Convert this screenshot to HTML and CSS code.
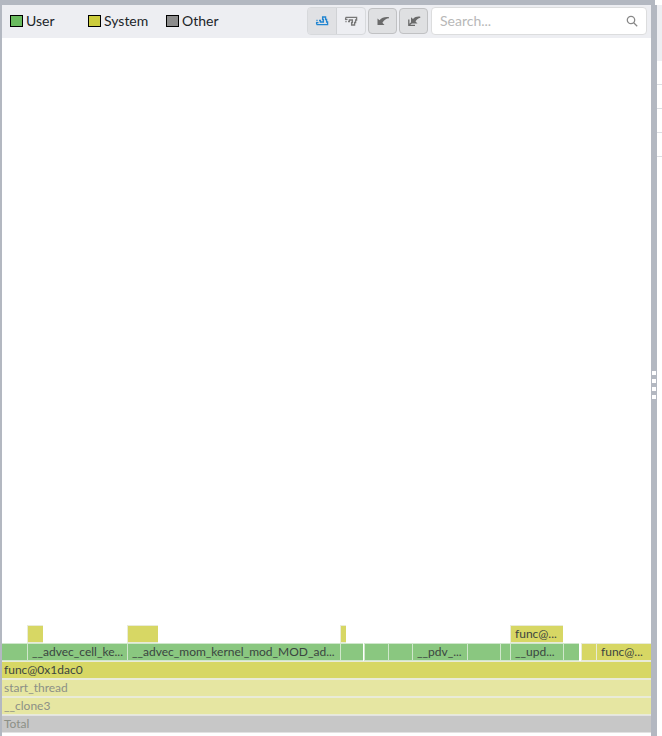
FILE: index.html
```html
<!DOCTYPE html>
<html lang="en">
<head>
<meta charset="utf-8">
<title>Flame Graph</title>
<link rel="stylesheet" href="styles.css">
</head>
<body>
<div class="workspace">
  <main class="panel">
    <header class="toolbar">
      <ul class="legend">
        <li><span class="swatch user"></span>User</li>
        <li><span class="swatch system"></span>System</li>
        <li><span class="swatch other"></span>Other</li>
      </ul>
      <div class="group">
        <button class="active" type="button" aria-label="Flame layout"><svg width="14" height="12" viewBox="0 0 14 12"><path d="M1.600 9.600H12.600V7H11.600V4.500H10.600V2H7.600V4.500H8.400V7H5.400V5.500H4M1.600 9.600V7.600H3.500"/><path d="M1.400 5.500H2.600"/></svg></button>
        <button type="button" aria-label="Icicle layout"><svg width="14" height="12" viewBox="0 0 14 12"><path d="M1.600 2.400H12.600V5H11.600V7.500H10.600V10H7.600V7.500H8.400V5H5.400V6.500H4M1.600 2.400V4.400H3.500"/><path d="M1.400 6.500H2.600"/></svg></button>
      </div>
      <button class="tool" type="button" aria-label="Undo zoom"><svg width="14" height="12" viewBox="0 0 14 12"><path class="solid" d="M1.500 10V3.500L3.500 5.300C5.800 2.600 9 1.600 13 2.200V3.300C10.300 3.500 8.300 4.800 6.400 7.700L8.500 10Z"/></svg></button>
      <button class="tool" type="button" aria-label="Reset zoom"><svg width="14" height="12" viewBox="0 0 14 12"><path class="solid" d="M4 8.500V2.300L6 4C8 1.900 10.500 1.200 13.300 1.700V2.800C11.200 3.200 9.900 4.300 8.500 6.400L10.500 8.500Z"/><path d="M1.800 4.500V10.300H8M2 10L4.500 7.800"/></svg></button>
      <label class="search">
        <input type="text" placeholder="Search..." aria-label="Search">
        <svg width="12" height="12" viewBox="0 0 12 12"><circle cx="5" cy="5" r="3.700"/><path d="M7.700 7.700L11.200 11.200"/></svg>
      </label>
    </header>
    <section class="chart" aria-label="Flame graph">
      <div class="row">
        <span class="gap" style="--w:25"></span>
        <span class="frame system" style="--w:16"></span>
        <span class="gap" style="--w:84"></span>
        <span class="frame system" style="--w:31"></span>
        <span class="gap" style="--w:182"></span>
        <span class="frame system" style="--w:6"></span>
        <span class="gap" style="--w:164"></span>
        <span class="frame system" style="--w:53">func@...</span>
      </div>
      <div class="row">
        <span class="frame user" style="--w:25"></span>
        <span class="frame user" style="--w:100">__advec_cell_ke...</span>
        <span class="frame user" style="--w:213">__advec_mom_kernel_mod_MOD_ad...</span>
        <span class="frame user" style="--w:23"></span>
        <span class="gap" style="--w:1"></span>
        <span class="frame user" style="--w:24"></span>
        <span class="frame user" style="--w:24"></span>
        <span class="frame user" style="--w:55">__pdv_...</span>
        <span class="frame user" style="--w:33"></span>
        <span class="frame user" style="--w:10"></span>
        <span class="frame user" style="--w:53">__upd...</span>
        <span class="frame user" style="--w:16"></span>
        <span class="gap" style="--w:2"></span>
        <span class="frame system" style="--w:15"></span>
        <span class="frame system" style="--w:55">func@...</span>
      </div>
      <div class="row full"><span class="frame system">func@0x1dac0</span></div>
      <div class="row full"><span class="frame system faded">start_thread</span></div>
      <div class="row full"><span class="frame system faded">__clone3</span></div>
      <div class="row full"><span class="frame total faded">Total</span></div>
    </section>
  </main>
  <div class="splitter"><i></i><i></i><i></i><i></i></div>
  <aside class="side">
    <div class="side-head"></div>
    <div class="side-row"></div>
    <div class="side-row"></div>
    <div class="side-row"></div>
    <div class="side-row"></div>
  </aside>
</div>
</body>
</html>
```
FILE: styles.css
```css
* { box-sizing: border-box; }
body {
  margin: 0;
  background: #fff;
  color: #212529;
  font-family: Lato, "Liberation Sans", sans-serif;
  font-size: 14px;
}
.workspace {
  display: flex;
  min-height: 100vh;
  background: linear-gradient(#b3b8c1, #b3b8c1) 0 0 / calc(100% - 7px) 5px no-repeat;
  padding-top: 5px;
}
.panel {
  flex: 1;
  min-width: 0;
  display: flex;
  flex-direction: column;
  border-left: 2px solid #b3b8c1;
}
.toolbar {
  display: flex;
  align-items: center;
  height: 33px;
  padding: 0 4px 1px 8px;
  background: #edeef2;
}
.legend {
  flex: 1;
  display: grid;
  grid-template-columns: repeat(3, 78px);
  margin: 0;
  padding: 0 0 2px;
  list-style: none;
}
.legend li { display: flex; align-items: center; gap: 3px; }
.swatch { width: 13px; height: 12px; margin-top: 2px; border: 1px solid #000; }
.swatch.user { background: #6abb5f; }
.swatch.system { background: #cccc3c; }
.swatch.other { background: #8c8c8c; }
button {
  display: flex;
  align-items: center;
  justify-content: center;
  padding: 0;
  border: 0;
  background: none;
  color: #777;
}
svg { fill: none; stroke: currentColor; stroke-width: 1.3; }
.solid { fill: currentColor; stroke: none; }
.group {
  display: flex;
  width: 59px;
  height: 28px;
  margin-right: 2px;
  border: 1px solid #d7d9dc;
  border-radius: 4px;
  overflow: hidden;
}
.group button { flex: 1; }
.group button + button { border-left: 1px solid #d0d2d5; }
.group .active { background: #e0e1e4; color: #2185d0; }
.tool {
  width: 29px;
  height: 26px;
  margin-right: 2px;
  border: 1px solid #c0c1c3;
  border-radius: 4px;
  background: #dfe0e2;
  color: #6a6a6a;
}
.search {
  display: flex;
  align-items: center;
  width: 216px;
  height: 28px;
  margin-left: 1px;
  padding: 0 8px;
  border: 1px solid #dcddde;
  border-radius: 4px;
  background: #fff;
  color: #888;
}
.search input {
  flex: 1;
  min-width: 0;
  padding: 0 0 2px;
  border: 0;
  outline: 0;
  background: none;
  font: inherit;
}
.search input::placeholder { color: #b8b8b8; }
.chart {
  flex: 1;
  display: flex;
  flex-direction: column;
  justify-content: flex-end;
  padding-bottom: 3px;
  font-size: 12px;
}
.row { display: flex; height: 18px; }
/* --w is the sample count out of 649 */
.frame, .gap { flex: none; width: calc(var(--w) / 649 * 100%); }
.frame {
  overflow: hidden;
  border: solid #e9ebd8;
  border-width: 1px 0 1px 1px;
  padding-left: 4px;
  line-height: 16px;
  white-space: nowrap;
  color: #3b4540;
}
.frame:empty { padding: 0; }
.frame:first-child { border-left: 0; }
.full .frame { width: 100%; padding-left: 2px; }
.frame.user { background: #8ac780; border-color: #d0e7cc; }
.frame.system { background: #d7d764; }
.frame.system.faded { background: #e6e6a2; }
.frame.total { background: #c7c7c7; border-color: #e2e2e2; }
.frame.faded { color: #8c9086; }
.splitter {
  display: flex;
  flex-direction: column;
  align-items: center;
  justify-content: center;
  gap: 4px;
  width: 6px;
  padding-top: 28px;
  background: #b3b8c1;
}
.splitter i { width: 4px; height: 4px; background: #fff; }
.side { width: 5px; }
.side-head { height: 56px; background: #edeef2; }
.side-row { height: 24px; border-bottom: 1px solid #dcdee3; }
```
